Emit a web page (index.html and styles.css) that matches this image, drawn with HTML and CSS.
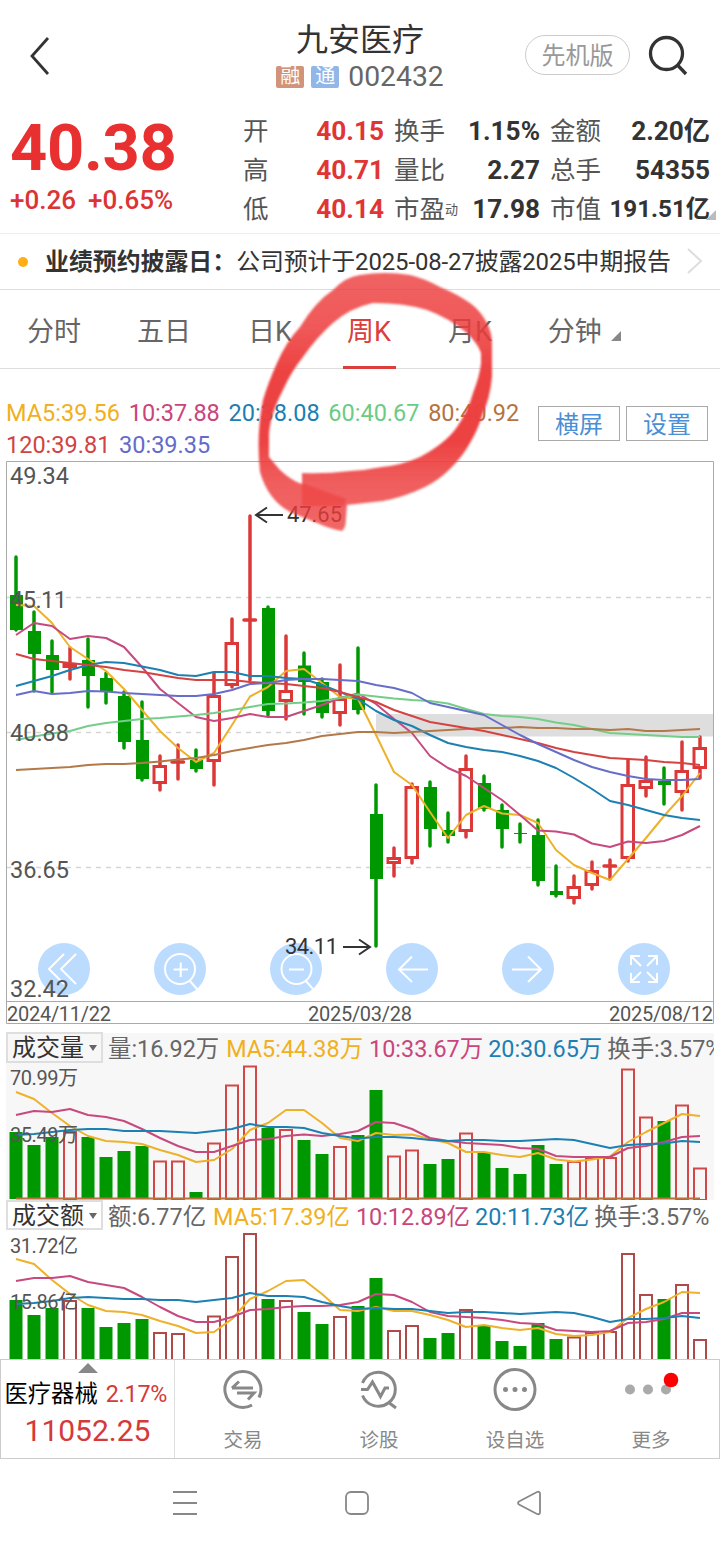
FILE: index.html
```html
<!DOCTYPE html>
<html lang="zh-CN">
<head>
<meta charset="utf-8">
<title>九安医疗 002432</title>
<link rel="stylesheet" href="styles.css">
</head>
<body>
<div class="screen">
  <header class="header">
    <div class="side">
      <svg class="back" width="24" height="40" viewBox="0 0 24 40"><path d="M20 2 4 20 20 38"/></svg>
    </div>
    <div class="heading">
      <h1 class="name">九安医疗</h1>
      <div class="code-row"><span class="tag tag-rong">融</span><span class="tag tag-tong">通</span><span class="code">002432</span></div>
    </div>
    <div class="side side-right">
      <span class="pill">先机版</span>
      <svg width="42" height="42" viewBox="0 0 42 42" class="search"><circle cx="18.500" cy="19.500" r="16"/><path d="M29.500 31 38 40"/></svg>
    </div>
  </header>

  <section class="quote">
    <div class="price-box">
      <div class="price">40.38</div>
      <div class="change"><span>+0.26</span><span>+0.65%</span></div>
    </div>
    <div class="stats">
      <span class="k">开</span><b class="v red">40.15</b><span class="k">换手</span><b class="v">1.15%</b><span class="k">金额</span><b class="v">2.20亿</b>
      <span class="k">高</span><b class="v red">40.71</b><span class="k">量比</span><b class="v">2.27</b><span class="k">总手</span><b class="v">54355</b>
      <span class="k">低</span><b class="v red">40.14</b><span class="k">市盈<small>动</small></span><b class="v">17.98</b><span class="k">市值</span><b class="v cap">191.51亿</b>
    </div>
    <i class="corner"></i>
  </section>

  <section class="notice">
    <i class="dot"></i><b>业绩预约披露日：</b><span>公司预计于2025-08-27披露2025中期报告</span>
    <svg width="18" height="30" viewBox="0 0 18 30"><path d="M2 3 15 15 2 27"/></svg>
  </section>

  <nav class="tabs">
    <span class="tab">分时</span><span class="tab">五日</span><span class="tab">日K</span><span class="tab active">周K</span><span class="tab">月K</span><span class="tab">分钟<i class="tri"></i></span>
  </nav>

  <section class="ma">
    <div class="ma-list">
      <div class="ma-line"><span class="c5">MA5:39.56</span><span class="c10">10:37.88</span><span class="c20">20:38.08</span><span class="c60">60:40.67</span><span class="c80">80:40.92</span></div>
      <div class="ma-line"><span class="c120">120:39.81</span><span class="c30">30:39.35</span></div>
    </div>
    <div class="ma-actions"><span class="box-btn">横屏</span><span class="box-btn">设置</span></div>
  </section>

  <svg class="kline" width="720" height="570" viewBox="0 460 720 570">
    <path class="grid" d="M6 597.500H713M6 732.500H713M6 867.500H713"/>
    <rect x="376" y="714" width="337" height="22.500" fill="#dedede"/>
    <g class="ctl">
      <circle cx="64" cy="969" r="26"/><circle cx="180" cy="969" r="26"/><circle cx="296" cy="969" r="26"/><circle cx="412" cy="969" r="26"/><circle cx="528" cy="969" r="26"/><circle cx="644" cy="969" r="26"/>
      <path d="M64 954 49 969 64 984M76 954 61 969 76 984"/>
      <path d="M195 969a15 15 0 1 1-30 0a15 15 0 1 1 30 0M189 980 197 989M173.500 969.500H188M180.700 962.500V977"/>
      <path d="M311.500 969a15 15 0 1 1-30 0a15 15 0 1 1 30 0M305 980 313 989M289 969.500H304"/>
      <path d="M428 969.500H399M412 956.500 399 969.500 412 982"/>
      <path d="M512 969.500H541M528 956.500 541 969.500 528 982"/>
      <path d="M631 965V956H640M631 956 641 966M648 956H657V965M657 956 647 966M631 973V982H640M631 982 641 972M648 982H657V973M657 982 647 972"/>
    </g>
    <g id="candles"></g>
    <g id="averages"></g>
    <path class="frame" d="M6.500 461.500H713.500V1023.500H6.500ZM6.500 1001.500H713.500"/>
    <g class="axis">
      <text x="10" y="484" textLength="59">49.34</text><text x="10" y="608" textLength="57">45.11</text><text x="10" y="741" textLength="59">40.88</text><text x="10" y="878" textLength="59">36.65</text><text x="10" y="997" textLength="59">32.42</text>
    </g>
    <g class="dates">
      <text x="7" y="1021" textLength="104">2024/11/22</text><text x="308" y="1021" textLength="104">2025/03/28</text><text x="609" y="1021" textLength="104">2025/08/12</text>
    </g>
    <g class="marks">
      <text x="287" y="522" textLength="55">47.65</text><text x="285" y="954" textLength="53">34.11</text>
      <path d="M283 515H256M267 507.500 256 515 267 522.500M343 947H370M359 939.500 370 947 359 954.500"/>
    </g>
  </svg>

  <section class="panel shaded">
    <div class="legend"><span class="select">成交量<i></i></span><span>量:16.92万</span><span class="c5">MA5:44.38万</span><span class="c10">10:33.67万</span><span class="c20">20:30.65万</span><span>换手:3.57%</span></div>
    <svg id="volume" width="720" height="137" viewBox="0 1063 720 137"></svg>
  </section>
  <section class="panel">
    <div class="legend legend-amount"><span class="select">成交额<i></i></span><span>额:6.77亿</span><span class="c5">MA5:17.39亿</span><span class="c10">10:12.89亿</span><span class="c20">20:11.73亿</span><span>换手:3.57%</span></div>
    <svg id="amount" width="720" height="129" viewBox="0 1230 720 129"></svg>
  </section>

  <footer class="toolbar">
    <div class="sector">
      <i class="up"></i>
      <div class="sector-row"><span>医疗器械</span><span class="red">2.17%</span></div>
      <div class="sector-value">11052.25</div>
    </div>
    <div class="tool"><svg width="60" height="60" viewBox="0 0 60 60"><path d="M39 45A18 18 0 1 1 46 37.500M19 28H40M19 28 26 21.500M24 33H41L35 39.500"/></svg><span>交易</span></div>
    <div class="tool"><svg width="60" height="60" viewBox="0 0 60 60"><path d="M13.500 23A17 17 0 1 1 13.500 35.500M39 42 47 48M12 29.500H18.500L23.500 22 31.500 36.500 36 28H40"/></svg><span>诊股</span></div>
    <div class="tool"><svg width="60" height="60" viewBox="0 0 60 60"><circle cx="30" cy="29.500" r="20"/><path class="pts" d="M20.500 29.500h.01M30 29.500h.01M39.500 29.500h.01"/></svg><span>设自选</span></div>
    <div class="tool"><svg width="60" height="60" viewBox="0 0 60 60"><g class="more"><circle cx="9" cy="29.500" r="5"/><circle cx="27" cy="29.500" r="5"/><circle cx="45" cy="29.500" r="5"/></g><circle class="badge" cx="50" cy="20" r="7.300"/></svg><span>更多</span></div>
  </footer>

  <div class="sysnav">
    <svg width="24" height="26" viewBox="0 0 24 26"><path d="M0 2H24M0 13H24M0 24H24"/></svg>
    <svg width="26" height="26" viewBox="0 0 26 26"><rect x="2" y="2" width="22" height="22" rx="5"/></svg>
    <svg width="26" height="26" viewBox="0 0 26 26"><path d="M3 11.500 21 2Q24 1 24 4V22Q24 25 21 24L3 14.500Q1 13 3 11.500Z"/></svg>
  </div>

  <svg class="scribble" width="720" height="560" viewBox="0 0 720 560">
    <defs>
      <filter id="soft" x="-5%" y="-5%" width="110%" height="110%"><feGaussianBlur stdDeviation="1.300"/></filter>
      <linearGradient id="ink" gradientUnits="userSpaceOnUse" x1="0" y1="270" x2="0" y2="535">
        <stop offset="0" stop-color="#ed3b3b" stop-opacity=".8"/>
        <stop offset=".2" stop-color="#ed3b3b" stop-opacity=".84"/>
        <stop offset=".38" stop-color="#ed3f3f" stop-opacity=".98"/>
        <stop offset=".65" stop-color="#ed3f3f" stop-opacity=".98"/>
        <stop offset=".8" stop-color="#ed3b3b" stop-opacity=".82"/>
        <stop offset="1" stop-color="#ed3b3b" stop-opacity=".78"/>
      </linearGradient>
    </defs>
    <g filter="url(#soft)">
      <path fill="url(#ink)" fill-rule="evenodd" d="M346 518Q346 528 342 531Q330 529 317 523L290 512Q268 500 260 472Q256 435 263 400Q268 383 277 363Q286 342 300 327Q315 302 333 290Q345 277 360 275Q385 271 410 275Q426 279 440 287Q457 294 470 303Q480 310 487 323Q492 333 492 343V377Q490 398 483 413Q478 430 470 443Q463 456 450 469Q438 481 423 488Q404 497 383 501L347 505ZM269 437V457L280 470Q292 481 302 484V473Q325 474 350 471Q367 470 382 467Q402 465 420 457Q446 443 457 427Q468 411 473 393Q480 375 481 363V353Q478 344 467 333Q449 318 427 310Q405 303 373 303Q350 308 333 323Q317 337 303 357Q291 372 283 390Q269 417 269 437Z"/>
      <path fill="#ed3b3b" fill-opacity=".55" d="M302 483 346 499 344 506H302Z"/>
    </g>
  </svg>
</div>
<script src="chart.js"></script>
</body>
</html>
```
FILE: styles.css
```css
* { box-sizing: border-box; }
body { margin: 0; background: #fff; font-family: Roboto, "Noto Sans CJK SC", sans-serif; color: #333; }
.screen { position: relative; width: 720px; height: 1546px; overflow: hidden; }
svg { display: block; flex: none; }
i { font-style: normal; }
.red { color: #e03535; }
.c5 { color: #f0b020; }
.c10 { color: #c9457c; }
.c20 { color: #1b7fb3; }
.c60 { color: #6ccb83; }
.c80 { color: #b5743f; }
.c120 { color: #d04444; }
.c30 { color: #636ccb; }

.header { display: grid; grid-template-columns: 200px 1fr 200px; height: 110px; }
.side { display: flex; align-items: center; padding: 2px 0 0 28px; }
.side-right { padding: 0 0 0 5px; gap: 18px; }
.back path { fill: none; stroke: #333; stroke-width: 2.800; }
.search { fill: none; stroke: #333; stroke-width: 3.300; }
.heading { display: flex; flex-direction: column; align-items: center; padding-top: 20px; }
.name { margin: 0; font-size: 32px; line-height: 40px; font-weight: 400; }
.code-row { display: flex; align-items: center; gap: 7px; height: 33px; color: #666; }
.tag { width: 28px; height: 22px; border-radius: 2px; color: #fff; font-size: 20px; line-height: 21px; text-align: center; }
.tag-rong { background: #d1937a; }
.tag-tong { background: #90b7e8; }
.code { font-size: 28.300px; line-height: 33px; margin-left: 2px; }
.pill { flex: none; width: 105px; height: 40px; border: 1px solid #ccc; border-radius: 20px; font-size: 24px; line-height: 41px; text-align: center; color: #999; }

.quote { position: relative; display: flex; height: 124px; border-bottom: 1px solid #eee; }
.price-box { width: 243px; padding-left: 10px; color: #e93030; }
.price { font-size: 65px; line-height: 76px; font-weight: 700; letter-spacing: -.3px; }
.change { display: flex; gap: 12px; font-size: 26px; line-height: 28px; font-weight: 500; color: #dc3434; }
.stats { display: grid; grid-template-columns: 53px 88px 64px 92px 62px 108px; grid-auto-rows: 39px; align-items: center; width: 467px; padding-top: 2px; }
.k { font-size: 25.500px; line-height: 39px; color: #555; white-space: nowrap; }
.stats .k:nth-child(6n+3), .stats .k:nth-child(6n+5) { padding-left: 10px; }
.k small { font-size: 13px; vertical-align: 4px; }
.v { font-size: 26.200px; line-height: 39px; font-weight: 700; text-align: right; white-space: nowrap; justify-self: end; }
.cap { font-size: 24.200px; }
.corner { position: absolute; right: 4px; bottom: 13px; border-left: 10px solid transparent; border-bottom: 10px solid #bbb; }

.notice { display: flex; align-items: center; height: 56px; padding-left: 18px; border-bottom: 1px solid #ddd; font-size: 23.900px; line-height: 54px; white-space: nowrap; }
.notice .dot { width: 10px; height: 10px; border-radius: 50%; background: #ffae13; margin-right: 17px; }
.notice span { letter-spacing: -.1px; }
.notice svg { margin: 0 16px 2px auto; fill: none; stroke: #ddd; stroke-width: 2; }

.tabs { display: flex; gap: 56px; height: 79px; padding-left: 27px; border-bottom: 1px solid #ddd; color: #666; font-size: 27px; line-height: 85px; }
.tab { flex: none; height: 79px; white-space: nowrap; }
.tab:nth-child(3) { margin-left: 1px; }
.tab:nth-child(4) { margin-left: -5px; }
.tab:nth-child(5) { margin-left: -4px; }
.tab:nth-child(6) { margin-left: 0; }
.active { color: #dc3d3d; border-bottom: 3px solid #dc3d3d; padding: 0 5px 0 4px; }
.tri { display: inline-block; margin-left: 9px; border-left: 10px solid transparent; border-bottom: 10px solid #888; }

.ma { display: flex; height: 91px; padding-left: 6px; }
.ma-list { width: 532px; padding-top: 28px; font-size: 23.500px; line-height: 32px; }
.ma-line { display: flex; gap: 8.700px; white-space: nowrap; }
.ma-actions { display: flex; gap: 6px; padding-top: 37px; }
.box-btn { width: 82px; height: 35px; border: 1px solid #aaa; color: #4b8fd4; font-size: 24px; line-height: 36px; text-align: center; }

.grid { fill: none; stroke: #d5d5d5; stroke-width: 1.700; stroke-dasharray: 5 5; }
.frame { fill: none; stroke: #aaa; }
.axis text { font-size: 23.500px; fill: #555; }
.dates text { font-size: 20px; fill: #555; }
.marks text { font-size: 22px; fill: #333; }
.marks path { fill: none; stroke: #333; stroke-width: 2; }
.ctl circle { fill: #bbdbff; }
.ctl path { fill: none; stroke: #fff; stroke-width: 2; }
.solid { fill: #009800; }
.wick-down { stroke: #009800; stroke-width: 3.500; stroke-linecap: round; }
.wick-up { stroke: #dc3838; stroke-width: 3.500; stroke-linecap: round; }
.hollow { fill: #fff; stroke: #dc3838; stroke-width: 3; }
.vbar { fill: none; stroke: #d24848; stroke-width: 2; }
.abar { fill: #fff; stroke: #b04a48; stroke-width: 2; }
.avg { fill: none; stroke-width: 2; stroke-linejoin: round; }
.small-label { font-size: 20px; fill: #555; }

.panel { height: 159px; }
.shaded { height: 170px; padding-top: 1px; background: linear-gradient(#f7f7f7, #f7f7f7) no-repeat 6px 3px / 708px 167px; }
.legend { display: flex; align-items: center; width: 714px; height: 32px; padding-left: 6px; overflow: hidden; font-size: 23.400px; line-height: 30px; white-space: nowrap; color: #666; }
.legend span { flex: none; margin-right: 5px; padding-top: 4px; }
.legend .c5 { margin-left: 2px; margin-right: 6px; }
.legend-amount { height: 30px; }
.legend .select { display: flex; align-items: center; width: 97px; height: 31px; padding: 2px 0 0 4px; border: 2px solid #dedede; font-size: 24px; color: #333; }
.legend-amount .select { height: 30px; }
.select i { margin-left: 5px; border: 4.500px solid transparent; border-top: 6px solid #666; border-bottom: 0; }

.toolbar { display: flex; height: 100px; border: 1px solid #ccc; background: #fff; }
.sector { width: 174px; border-right: 1px solid #ddd; display: flex; flex-direction: column; align-items: center; padding-top: 3px; }
.up { border: 10px solid transparent; border-bottom-color: #888; border-top: 0; }
.sector-row { display: flex; gap: 8px; width: 166px; height: 40px; font-size: 23.300px; line-height: 43px; color: #000; white-space: nowrap; }
.sector-row .red { color: #d43a3a; letter-spacing: -.2px; }
.sector-value { font-size: 30px; line-height: 36px; color: #d43a3a; }
.tool { flex: 1; display: flex; flex-direction: column; align-items: center; color: #888; font-size: 19.500px; line-height: 28px; }
.tool span { margin-top: 7px; }
.tool svg { fill: none; stroke: #888; stroke-width: 3; overflow: visible; }
.tool .pts { stroke-width: 5; stroke-linecap: round; }
.tool .more { fill: #aaa; stroke: none; }
.tool .badge { fill: #f00; stroke: none; }

.sysnav { display: flex; gap: 147px; padding: 31px 0 0 173px; }
.sysnav svg { fill: none; stroke: #888; stroke-width: 1.800; }
.sysnav svg:last-child { margin-left: -1px; }
.scribble { position: absolute; left: 0; top: 0; pointer-events: none; }
```
FILE: chart.js
```js
const X0 = 16, STEP = 18;
const x = i => X0 + i * STEP;
const poly = (ys, color) =>
  `<polyline class="avg" stroke="${color}" points="${ys.map((y, i) => x(i) + ',' + y).join(' ')}"/>`;

// direction, high, body top, body bottom, low
const candles = [
  ['g',557,595,630,630],['g',612,631,654,691],['g',641,655,670,692],['r',648,663,668,679],['g',639,660,676,707],
  ['g',673,678,691,703],['g',692,696,742,748],['g',702,740,779,780],['r',756,765,784,790],['r',745,761,763,779],
  ['g',750,760,769,771],['r',673,695,762,785],['r',619,642,686,687],['r',516,618.5,621.5,680],['g',607,608,711,715],
  ['r',636,690,702,719],['g',653,665.5,682,714],['g',679,682,713,717],['r',665,698,714,725],['g',648,698,710,713],
  ['g',785,814,879,946],['r',848,857,864,876],['r',784,786,859,863],['g',782,787,829,846],['g',813,830,836,842],
  ['r',756,768,832,837],['g',776,783,809,810],['g',805,810,829,847],['t',824,833,834,842],['g',820,835,881,885],
  ['g',866,891,895,896],['r',876,886,899,903],['r',862,870,886,889],['r',860,864.5,867.5,879],['r',760,784,859,861],
  ['r',757,780,789,796],['g',768,781,785,804],['r',742,770,793,810],['r',737,747,769,778]
];
document.getElementById('candles').innerHTML = candles.map(([d, h, t, b, l], i) => {
  const cx = x(i), w = d === 'r' ? 'wick-up' : 'wick-down';
  let s = '';
  if (d === 'r' && b - t > 4) {
    s += `<path class="${w}" d="M${cx} ${h}V${t}M${cx} ${b}V${l}"/>`;
    s += `<rect class="hollow" x="${cx - 6}" y="${t + 1.5}" width="11.5" height="${b - t - 3}"/>`;
  } else if (d === 'r') {
    s += `<path class="${w}" d="M${cx} ${h}V${l}M${cx - 6} ${(t + b) / 2}H${cx + 5.5}"/>`;
  } else {
    s += `<path class="${w}" d="M${cx} ${h}V${l}"/>`;
    s += `<rect class="solid" x="${cx - 6}" y="${t}" width="13" height="${b - t}"/>`;
  }
  return s;
}).join('');

const Y = '#edb12a', P = '#c64a7e', B = '#1c80b2';
document.getElementById('averages').innerHTML =
  poly([605,606,623,647,659,671,689,710,731,748,762,753,725,696.5,687,671,669,683,697,699,735,772,785,812,838,815,806,813.5,815,823,850,865,873,880,859,838,816,796,773], Y) +
  poly([635,623,626,639,636,638,647,667,689,703,717,721,718,714,717,717,711,705,698,693.5,704,719,733,756,768,776,788,800,815,830.5,831.5,834.5,843.5,847,841.5,843,841,835,826], P) +
  poly([686,681,676,670,665,662,663,666.5,670,675,676,672,672,676,676,678,679,685,692,699,711,720,726,735,743,747,750,752,756,761,768,778,789,801,805,810,815,818,820], B) +
  poly([740,736.5,733.5,731,726,723,721,719,718,716.5,715,713,710,707,704,703.5,702.5,701,698,694.5,696.5,698.5,700,701,703.5,709,714,716,717,719,722.5,725,729,733,734,735,736,737,737], '#74ce8a') +
  poly([770,769,768,767,765,764,764,763,761.5,759.5,758,755,751,748,745,743,740,736,734,732,732,733,732,731,730,729,728,728,727,728,728,729,729,730,729,731,731,730,729], '#b27a4a') +
  poly([654,659,661,663,665,667,670,672,675,678,680,680,680,682,683,684,686,688,692,697,702,710,716,722,725,728,731,735,739,743,748,752,755,758,759,760,762,763,765], '#d44242') +
  poly([695,691,694,693,691,691.5,693,694,695,696,696,694,690,684,683,680,679,679,680,681,685,688,693,703,707,711,715,725,735,744,752,760,767,772,776,779,780,780,779], '#666ec8');

const dir = candles.map(c => c[0]);
function bars(tops, base, cls) {
  return tops.map((t, i) => {
    if (t === null) return '';
    return dir[i] === 'r'
      ? `<rect class="${cls}" x="${x(i) - 6}" y="${t + 1}" width="12" height="${base - t}"/>`
      : `<rect class="solid" x="${x(i) - 6.5}" y="${t}" width="13" height="${base - t}"/>`;
  }).join('');
}
const label = (s, y, len) => `<text class="small-label" x="10" y="${y}" textLength="${len}">${s}</text>`;

document.getElementById('volume').innerHTML =
  bars([1132,1145,1137,1131,1137,1157,1151,1146,1160.5,1160.5,1192,1142.5,1084.5,1065.5,1128,1129,1140,1154,1146,1135,1090,1155.5,1149.5,1164,1159,1132.5,1152,1168,1174,1145,1164,1161,1157,1157,1068.5,1116.5,1121,1104.5,1167.5], 1199, 'vbar') +
  '<path stroke="#b9713e" stroke-width="2" d="M16 1198.5H700"/>' +
  poly([1092,1099,1113,1126,1136,1141,1142,1144,1150,1155,1162,1160,1149,1130,1123,1110,1110,1123,1138,1141,1133,1135,1134.5,1139,1143,1152,1152,1155,1157,1153,1159.5,1161.5,1159.5,1156.5,1142,1132,1123,1114,1116], Y) +
  poly([1115,1111,1112,1109,1115,1117,1121,1129,1138,1146,1152,1152,1146,1140,1139,1136,1134.5,1136,1134,1131,1122,1123,1129,1138,1141,1143,1144,1145,1148,1149,1156,1157,1157,1157,1148,1146,1142,1137,1136], P) +
  poly([1135,1134,1132,1130,1129,1129,1131,1131,1131,1132,1133,1131,1129,1124,1127,1127,1128,1133,1136,1138.5,1137,1137,1138,1140,1141,1140,1140,1141,1141,1140,1139,1140,1144,1148,1145,1144,1143.5,1141,1142], B) +
  label('70.99万', 1085, 68) + label('35.49万', 1142, 68);

document.getElementById('amount').innerHTML =
  bars([1300,1315,1308,1300,1308,1327,1323,1319,1332,1333,null,1315.5,1256,1233,1299,1300,1312,1324,1316,1306,1278,1330,1325,1338,1333,1309,1326,1341,1346,1323,1339,1336.5,1332,1331,1253,1294,1299,1284,1339], 1362, 'abar') +
  poly([1259,1264,1280,1294,1305,1311,1312,1315,1321,1326,1333,1332,1319,1299,1291,1281,1280,1294,1310,1311,1307,1311,1311,1315,1320,1327,1325,1328,1330,1328,1334,1336,1335,1332,1318,1309,1302,1292,1293], Y) +
  poly([1281,1278,1278,1276,1282,1285,1288,1297,1307,1316,1322,1322,1317,1310,1309,1307,1306,1306,1305,1302,1294,1295,1302,1312,1316,1317,1318,1320,1323,1324,1330,1331,1332,1331,1323,1322,1319,1313,1313], P) +
  poly([1304,1303,1301,1298,1297,1298,1299,1299,1300,1300,1302,1300,1298,1293,1296,1296,1297,1302,1306,1309,1308,1309,1309,1311,1313,1312,1312,1313,1314,1313,1312,1313,1317,1322,1319,1319,1318,1316,1318], B) +
  label('31.72亿', 1252.500, 68) + label('15.86亿', 1309, 68);
```
